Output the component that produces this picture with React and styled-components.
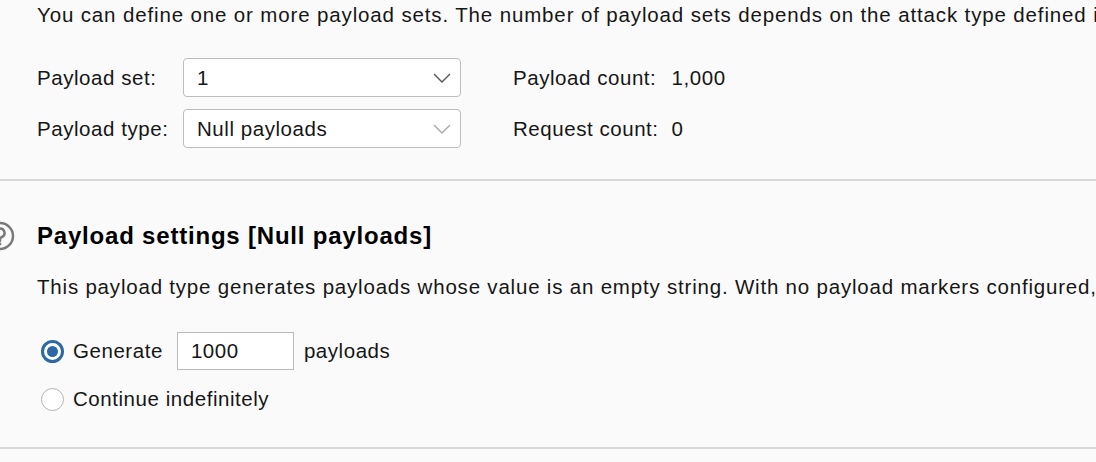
import styled, {createGlobalStyle} from "styled-components";

const GlobalStyle = createGlobalStyle`
    html, body {
        margin: 0;
        padding: 0;
        background: #fafafa;
    }
    body {
        font-family: "Liberation Sans", Arial, sans-serif;
        color: #161616;
        overflow: hidden;
    }
`

const Page = styled.div`
    width: 1096px;
    height: 462px;
    overflow: hidden;
    display: flex;
    flex-direction: column;
    font-size: 20.5px;
    letter-spacing: 0.55px;
`

const Section = styled.div`
    display: flex;
    flex-direction: column;
    padding-left: 37px;
    padding-top: ${props => props.$top || 0}px;
    padding-bottom: ${props => props.$bottom || 0}px;
`

const Divider = styled.div`
    height: 2px;
    background: #d8d8d8;
    flex: none;
`

const Text = styled.div`
    line-height: 30px;
    white-space: nowrap;
    margin-top: ${props => props.$mt || 0}px;
    letter-spacing: ${props => props.$spacing || 0.62}px;
`

const SetGrid = styled.div`
    display: grid;
    grid-template-columns: 146px 278px max-content max-content;
    justify-content: start;
    grid-auto-rows: 39px;
    row-gap: 12px;
    align-items: center;
    margin-top: 28px;
`

const Label = styled.span`
    white-space: nowrap;
`

const StatLabel = styled.span`
    margin-left: 52px;
    white-space: nowrap;
`

const StatValue = styled.span`
    margin-left: 13px;
`

const Select = styled.div`
    height: 39px;
    box-sizing: border-box;
    border: 1.5px solid #bdbdbd;
    border-radius: 4px;
    background: #fff;
    display: flex;
    align-items: center;
    justify-content: space-between;
    padding: 0 9px 0 13px;
`

const HeadingRow = styled.div`
    display: flex;
    align-items: center;
    gap: 22px;
    height: 30px;
    margin-top: 40px;
`

const HelpIcon = styled.svg`
    width: 30px;
    height: 30px;
    margin-left: -52px;
    flex: none;
`

const Heading = styled.h2`
    margin: 0;
    font-size: 24px;
    letter-spacing: 0.8px;
    font-weight: bold;
    color: #000;
    white-space: nowrap;
`

const OptionRow = styled.label`
    display: flex;
    align-items: center;
    height: 38px;
    margin-top: ${props => props.$mt || 0}px;
    padding-left: 4px;
    white-space: nowrap;
`

const Radio = styled.span`
    width: 23px;
    height: 23px;
    box-sizing: border-box;
    border-radius: 50%;
    flex: none;
    background: #fff;
    border: ${props => props.$checked ? "3px solid #2c68a6" : "1.5px solid #b3b3b3"};
    display: flex;
    align-items: center;
    justify-content: center;
    margin-right: 9px;

    &::after {
        content: "";
        display: ${props => props.$checked ? "block" : "none"};
        width: 11px;
        height: 11px;
        border-radius: 50%;
        background: #2c68a6;
    }
`

const CountInput = styled.div`
    width: 117px;
    height: 38px;
    box-sizing: border-box;
    border: 1.5px solid #bababa;
    background: #fff;
    display: flex;
    align-items: center;
    padding-left: 13px;
    margin: 0 10px 0 14px;
`

const Chevron = ({muted}) => (
    <svg width="18" height="10" viewBox="0 0 18 10">
        <path d="M1 1l8 8 8-8" fill="none" stroke={muted ? "#a8a8a8" : "#555"} strokeWidth="1.4"/>
    </svg>
)

export default function App() {
    return (
        <Page>
            <GlobalStyle/>
            <Section $bottom={31}>
                <Text $spacing={0.86}>You can define one or more payload sets. The number of payload sets depends on the attack type defined in the Positions tab.</Text>
                <SetGrid>
                    <Label>Payload set:</Label>
                    <Select>1<Chevron/></Select>
                    <StatLabel>Payload count:</StatLabel>
                    <StatValue>1,000</StatValue>

                    <Label>Payload type:</Label>
                    <Select>Null payloads<Chevron muted/></Select>
                    <StatLabel>Request count:</StatLabel>
                    <StatValue>0</StatValue>
                </SetGrid>
            </Section>
            <Divider/>
            <Section $bottom={29}>
                <HeadingRow>
                    <HelpIcon viewBox="0 0 30 30">
                        <circle cx="15" cy="15" r="13" fill="none" stroke="#7a7a7a" strokeWidth="2.5"/>
                        <path d="M10.5 12a4.5 4.5 0 1 1 6.2 4.2c-1.1.5-1.7 1.3-1.7 2.5v1" fill="none" stroke="#7a7a7a" strokeWidth="2.5" strokeLinecap="round"/>
                        <circle cx="15" cy="23" r="1.4" fill="#7a7a7a"/>
                    </HelpIcon>
                    <Heading>Payload settings [Null payloads]</Heading>
                </HeadingRow>
                <Text $mt={21} $spacing={0.8}>This payload type generates payloads whose value is an empty string. With no payload markers configured, this can be used to repeatedly issue the base request.</Text>
                <OptionRow $mt={30}>
                    <Radio $checked/>
                    Generate
                    <CountInput>1000</CountInput>
                    payloads
                </OptionRow>
                <OptionRow $mt={10}>
                    <Radio/>
                    Continue indefinitely
                </OptionRow>
            </Section>
            <Divider/>
        </Page>
    )
}
